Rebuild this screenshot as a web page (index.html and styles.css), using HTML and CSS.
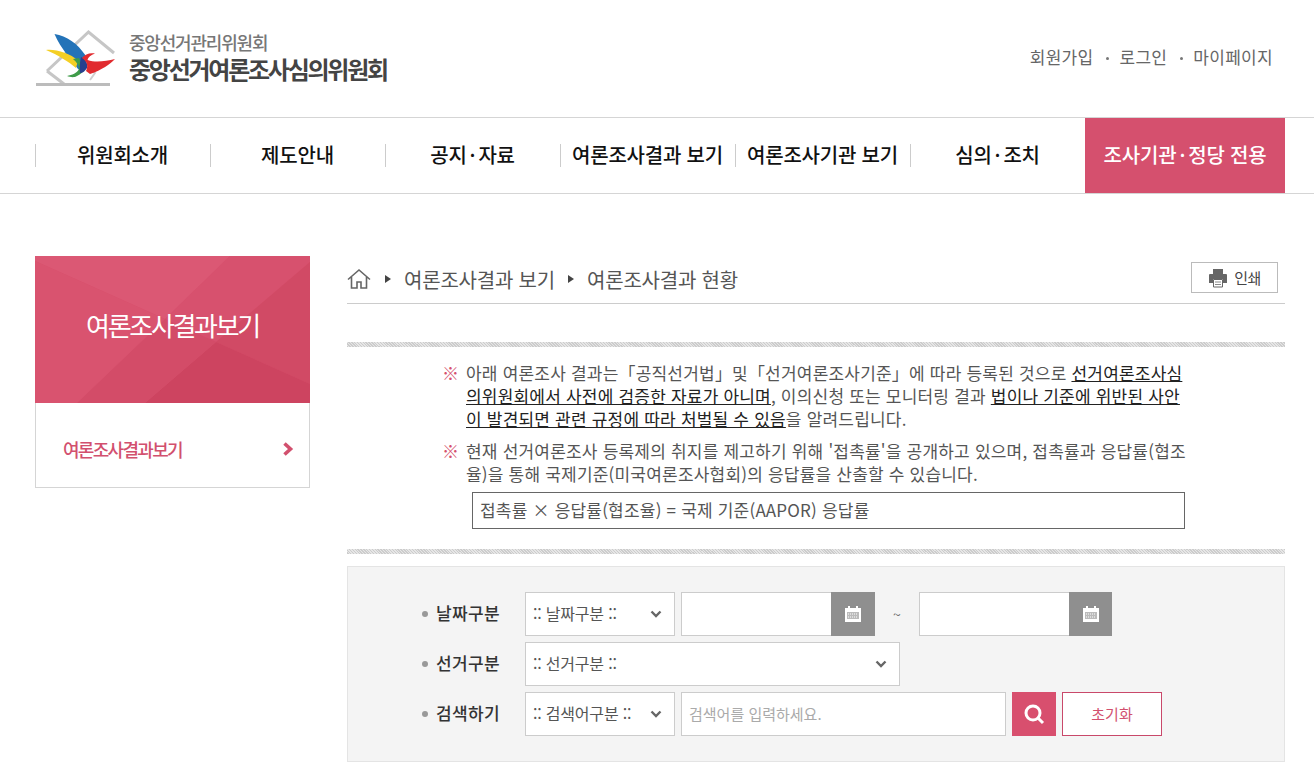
FILE: index.html
```html
<!DOCTYPE html>
<html lang="ko">
<head>
<meta charset="utf-8">
<title>여론조사결과 현황</title>
<link rel="stylesheet" href="styles.css">
</head>
<body>
<header class="top">
  <a class="logo" href="#">
    <svg class="logo-mark" width="82" height="60" viewBox="0 0 82 60">
      <path d="M12 43 L53.500 4 L79 25 M12 43 L29 56" fill="none" stroke="#c6c6c6" stroke-width="3"/>
      <path d="M53 39 L60 45 L55 52" fill="none" stroke="#cfcfcf" stroke-width="2"/>
      <rect x="1" y="55" width="74" height="3" fill="#bcbcbc"/>
      <path d="M19.500 6 C32 8 42 15 51 28 L47 43 L43 41 C36 31 26 21 19.500 6 Z" fill="#2373b8"/>
      <path d="M11 22 C21 21 35 25 43 33 L41 40 C34 34 23 27 11 22 Z" fill="#f4cf24"/>
      <path d="M38 31 C42 34 44 38 44 41 C42 45 37 47 32 48 C35 49 39 50 42 48 C46 46 48 44 49 41 L44 30 Z" fill="#3f9c49"/>
      <path d="M46 29 C51 31 53 36 52 40 C50 43 48 45 45 45 C44 40 45 34 46 29 Z" fill="#27408e"/>
      <path d="M47 30 C50 26 55 24.500 60 25.500 C56 27 53 29 52.500 32 C61 35 71 33 80 31 C75 36 67 42 55 46 L51 43 C53 39 53 34 47 30 Z" fill="#e12b2f"/>
    </svg>
    <span class="logo-text">
      <span class="logo-sub">중앙선거관리위원회</span>
      <span class="logo-main">중앙선거여론조사심의위원회</span>
    </span>
  </a>
  <ul class="util">
    <li><a href="#">회원가입</a></li>
    <li><a href="#">로그인</a></li>
    <li><a href="#">마이페이지</a></li>
  </ul>
</header>
<nav class="gnb">
  <ul class="gnb-list">
    <li class="gnb-item"><a href="#">위원회소개</a></li>
    <li class="gnb-item"><a href="#">제도안내</a></li>
    <li class="gnb-item"><a href="#">공지<span class="dot">·</span>자료</a></li>
    <li class="gnb-item"><a href="#">여론조사결과 보기</a></li>
    <li class="gnb-item"><a href="#">여론조사기관 보기</a></li>
    <li class="gnb-item"><a href="#">심의<span class="dot">·</span>조치</a></li>
    <li class="gnb-item gnb-special"><a href="#">조사기관<span class="dot">·</span>정당 전용</a></li>
  </ul>
</nav>
<div class="wrap">
  <aside class="side">
    <div class="side-title">
      <svg class="side-bg" viewBox="0 0 275 147" preserveAspectRatio="none">
        <rect width="275" height="147" fill="#d84f6c"/>
        <polygon points="0,0 195,0 130,63 0,5" fill="#db5874"/>
        <polygon points="195,0 275,0 275,6 181,86 130,63" fill="#d7516e"/>
        <polygon points="275,6 275,128 181,86" fill="#d14a65"/>
        <polygon points="181,86 275,128 275,147 110,147" fill="#cd4460"/>
        <polygon points="130,63 181,86 110,147 42,147" fill="#d34c68"/>
        <polygon points="0,5 130,63 42,147 0,147" fill="#d9536f"/>
      </svg>
      <h2 class="side-heading">여론조사결과보기</h2>
    </div>
    <a class="side-link" href="#">
      <span>여론조사결과보기</span>
      <svg width="12" height="16" viewBox="0 0 12 16"><path d="M2.500 2.500 L8.500 8 L2.500 13.500" fill="none" stroke="#d2506e" stroke-width="3.600"/></svg>
    </a>
  </aside>
  <main class="content">
    <div class="crumb-bar">
      <ol class="crumbs">
        <li class="crumb-home">
          <svg width="24" height="22" viewBox="0 0 24 22"><path d="M1 11.500 L12 2 L23 11.500 M4.500 9 V20 H10 V14 H14 V20 H19.500 V9" fill="none" stroke="#666" stroke-width="1.600"/></svg>
        </li>
        <li class="crumb">여론조사결과 보기</li>
        <li class="crumb">여론조사결과 현황</li>
      </ol>
      <button class="print" type="button">
        <svg width="20" height="20" viewBox="0 0 20 20">
          <path d="M5 1 H15 V6 H5 Z" fill="#666"/>
          <path d="M2 6 H18 Q19 6 19 7 V15 H15 V11 H5 V15 H1 V7 Q1 6 2 6 Z" fill="#666"/>
          <path d="M5.500 11.500 H14.500 V19 H5.500 Z" fill="#fff" stroke="#666"/>
          <path d="M7 14 H13 M7 16.500 H13" stroke="#888"/>
        </svg>
        <span>인쇄</span>
      </button>
    </div>
    <section class="notice">
      <p class="note"><span class="mark">※</span><span class="note-body">아래 여론조사 결과는「공직선거법」및「선거여론조사기준」에 따라 등록된 것으로 <u>선거여론조사심의위원회에서 사전에 검증한 자료가 아니며</u>, 이의신청 또는 모니터링 결과 <u>법이나 기준에 위반된 사안이 발견되면 관련 규정에 따라 처벌될 수 있음</u>을 알려드립니다.</span></p>
      <p class="note note-second"><span class="mark">※</span><span class="note-body">현재 선거여론조사 등록제의 취지를 제고하기 위해 '접촉률'을 공개하고 있으며, 접촉률과 응답률(협조율)을 통해 국제기준(미국여론조사협회)의 응답률을 산출할 수 있습니다.</span></p>
      <div class="formula">접촉률 × 응답률(협조율) = 국제 기준(AAPOR) 응답률</div>
    </section>
    <form class="search">
      <div class="row">
        <span class="label">날짜구분</span>
        <span class="select w150"><span>:: 날짜구분 ::</span><svg class="chev" width="12" height="8" viewBox="0 0 12 8"><path d="M1.500 1.500 L6 6 L10.500 1.500" fill="none" stroke="#666" stroke-width="2.400"/></svg></span>
        <span class="date">
          <span class="date-input"></span>
          <span class="cal"><svg width="16" height="16" viewBox="0 0 16 16"><path d="M0 2 H3 V0 H5 V2 H11 V0 H13 V2 H16 V16 H0 Z" fill="#fff"/><rect x="2" y="6" width="12" height="7" fill="#bbb"/><path d="M3 8 H13 M3 11 H13" stroke="#fff" stroke-dasharray="1 1"/></svg></span>
        </span>
        <span class="tilde">~</span>
        <span class="date date-b">
          <span class="date-input"></span>
          <span class="cal"><svg width="16" height="16" viewBox="0 0 16 16"><path d="M0 2 H3 V0 H5 V2 H11 V0 H13 V2 H16 V16 H0 Z" fill="#fff"/><rect x="2" y="6" width="12" height="7" fill="#bbb"/><path d="M3 8 H13 M3 11 H13" stroke="#fff" stroke-dasharray="1 1"/></svg></span>
        </span>
      </div>
      <div class="row">
        <span class="label">선거구분</span>
        <span class="select w375"><span>:: 선거구분 ::</span><svg class="chev" width="12" height="8" viewBox="0 0 12 8"><path d="M1.500 1.500 L6 6 L10.500 1.500" fill="none" stroke="#666" stroke-width="2.400"/></svg></span>
      </div>
      <div class="row">
        <span class="label">검색하기</span>
        <span class="select w150"><span>:: 검색어구분 ::</span><svg class="chev" width="12" height="8" viewBox="0 0 12 8"><path d="M1.500 1.500 L6 6 L10.500 1.500" fill="none" stroke="#666" stroke-width="2.400"/></svg></span>
        <span class="keyword">검색어를 입력하세요.</span>
        <button class="go" type="button" aria-label="검색"><svg width="22" height="22" viewBox="0 0 22 22"><circle cx="10" cy="10" r="7" fill="none" stroke="#fff" stroke-width="3"/><path d="M15 15 L20 20" stroke="#fff" stroke-width="3"/></svg></button>
        <button class="reset" type="button">초기화</button>
      </div>
    </form>
  </main>
</div>
</body>
</html>
```

FILE: styles.css
```css
* { box-sizing: border-box; }
html, body { margin: 0; padding: 0; }
body {
  background: #fff;
  color: #555;
  font-family: "Noto Sans CJK KR", "Noto Sans", sans-serif;
  font-size: 16px;
  overflow: hidden;
  height: 767px;
}
a { color: inherit; text-decoration: none; }
ul, ol { list-style: none; margin: 0; padding: 0; }
p, h2 { margin: 0; }
button { font-family: inherit; cursor: pointer; }

.top {
  height: 117px;
  padding: 0 41px 0 35px;
  display: flex;
  align-items: center;
  justify-content: space-between;
}
.logo { display: flex; align-items: center; gap: 12px; margin-top: -2px; }
.logo-mark { display: block; }
.logo-text { display: flex; flex-direction: column; }
.logo-sub { font-size: 18px; line-height: 23px; font-weight: 500; color: #777; letter-spacing: -1.2px; }
.logo-main { font-size: 24px; line-height: 30px; font-weight: 700; color: #444; letter-spacing: -2.25px; }
.util { display: flex; color: #666; font-size: 17px; letter-spacing: 0.3px; margin-top: -5px; }
.util li { display: flex; align-items: center; }
.util li + li::before {
  content: "";
  width: 3px;
  height: 3px;
  border-radius: 50%;
  background: #777;
  margin: 4px 10px 0 13px;
}

.gnb { height: 77px; border-top: 1px solid #d5d5d5; border-bottom: 1px solid #d5d5d5; padding: 0 29px 0 35px; }
.gnb-list { display: flex; height: 75px; }
.gnb-item {
  width: 175px;
  display: flex;
  align-items: center;
  justify-content: center;
  padding-bottom: 3px;
  font-size: 20px;
  font-weight: 500;
  color: #111;
  letter-spacing: -0.2px;
  position: relative;
  white-space: nowrap;
}
.gnb-item::before {
  content: "";
  position: absolute;
  left: 0;
  top: 26px;
  height: 23px;
  border-left: 1px solid #ccc;
}
.dot { margin: 0 3px; }
.gnb-special { width: 200px; background: #d5506e; color: #fff; }
.gnb-special::before { display: none; }

.wrap { display: flex; padding: 62px 29px 0 35px; gap: 37px; }
.side { width: 275px; flex: none; }
.side-title {
  position: relative;
  height: 147px;
  display: flex;
  align-items: center;
  justify-content: center;
  overflow: hidden;
}
.side-bg { position: absolute; inset: 0; width: 100%; height: 100%; }
.side-heading { position: relative; color: #fff; font-size: 26px; font-weight: 400; letter-spacing: -2.3px; padding-bottom: 10px; }
.side-link {
  height: 85px;
  border: 1px solid #d5d5d5;
  border-top: 0;
  display: flex;
  align-items: center;
  justify-content: space-between;
  padding: 7px 15px 0 27px;
  color: #d2506e;
  font-size: 18px;
  font-weight: 500;
  letter-spacing: -1.7px;
}

.content { width: 938px; flex: none; }
.crumb-bar {
  height: 48px;
  border-bottom: 1px solid #ccc;
  display: flex;
  justify-content: space-between;
  align-items: flex-start;
  padding: 6px 7px 0 0;
}
.crumbs { display: flex; align-items: center; font-size: 20px; letter-spacing: -0.2px; color: #555; height: 34px; }
.crumb-home { display: flex; }
.crumb { display: flex; align-items: center; }
.crumb::before {
  content: "";
  border-left: 6px solid #444;
  border-top: 4px solid transparent;
  border-bottom: 4px solid transparent;
  margin: 0 13px 0 14px;
}
.crumb + .crumb::before { margin-left: 13px; margin-right: 13px; }
.print {
  width: 87px;
  height: 31px;
  background: #fff;
  border: 1px solid #bbb;
  display: flex;
  align-items: center;
  justify-content: center;
  gap: 6px;
  padding: 0;
  color: #444;
  font-size: 15px;
  letter-spacing: -0.5px;
}

.notice {
  margin-top: 38px;
  height: 212px;
  padding: 14px 94px 0 95px;
  border-top: 5px solid transparent;
  border-bottom: 5px solid transparent;
  border-image: repeating-linear-gradient(45deg, #ccc 0 1px, #e6e6e6 1px 2px) 5;
  font-size: 17px;
  letter-spacing: 0.2px;
  line-height: 23px;
  color: #555;
}
.note { display: flex; gap: 9px; }
.note-body { word-break: break-all; }
.note u { color: #222; }
.note-second { margin-top: 9px; }
.mark { color: #d5506e; flex: none; width: 15px; }
.formula {
  margin: 7px 6px 0 30px;
  height: 37px;
  border: 1px solid #666;
  padding-left: 7px;
  line-height: 33px;
}

.search {
  margin-top: 12px;
  height: 196px;
  background: #f4f4f4;
  border: 1px solid #e4e4e4;
  padding: 25px 0 0 74px;
  display: flex;
  flex-direction: column;
  gap: 6px;
}
.row { display: flex; align-items: center; height: 44px; }
.label {
  width: 103px;
  padding-bottom: 3px;
  font-weight: 500;
  font-size: 17px;
  letter-spacing: 0.4px;
  color: #333;
  display: flex;
  align-items: center;
  gap: 8px;
}
.label::before {
  content: "";
  width: 6px;
  height: 6px;
  margin-top: 3px;
  border-radius: 50%;
  background: #999;
}
.select {
  height: 44px;
  background: #fff;
  border: 1px solid #ccc;
  display: flex;
  align-items: center;
  justify-content: space-between;
  padding: 0 12px 0 7px;
  font-size: 16px;
  letter-spacing: -0.2px;
  color: #555;
}
.select > span { padding-bottom: 3px; }
.w150 { width: 150px; }
.w375 { width: 375px; }
.date { display: flex; margin-left: 6px; width: 194px; height: 44px; }
.date-b { margin-left: 0; width: 193px; }
.date-input { flex: 1; background: #fff; border: 1px solid #ccc; border-right: 0; }
.cal { width: 44px; background: #8f8f8f; display: flex; align-items: center; justify-content: center; }
.date-b .cal { width: 43px; }
.tilde { width: 44px; text-align: center; font-size: 14px; color: #666; }
.keyword {
  width: 325px;
  height: 44px;
  margin-left: 6px;
  background: #fff;
  border: 1px solid #ccc;
  padding-left: 7px;
  font-size: 15px;
  line-height: 41px;
  color: #aaa;
}
.go {
  width: 44px;
  height: 44px;
  margin-left: 6px;
  padding: 0;
  border: 0;
  background: #d84f6e;
  display: flex;
  align-items: center;
  justify-content: center;
}
.reset {
  width: 100px;
  height: 44px;
  margin-left: 6px;
  padding: 0 0 2px;
  background: #fff;
  border: 1px solid #c9486a;
  color: #d2506e;
  font-size: 15px;
}
```
